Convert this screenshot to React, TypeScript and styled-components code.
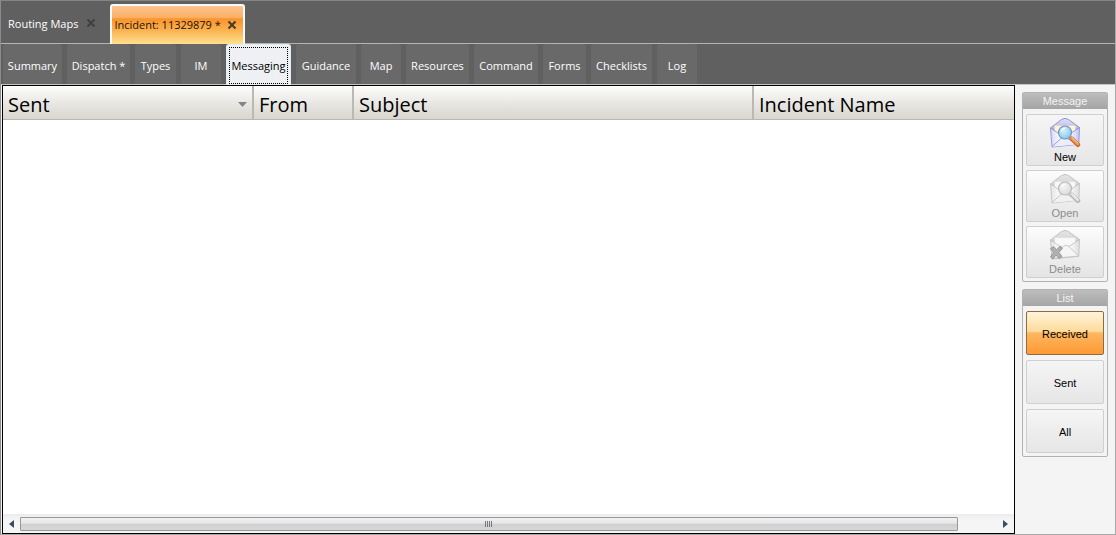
import React, { useState } from "react";
import styled, { createGlobalStyle, css } from "styled-components";

const GlobalStyle = createGlobalStyle`
  *, *::before, *::after { box-sizing: border-box; }
  body { margin: 0; background: #f4f4f4; }
  button { margin: 0; padding: 0; border: 0; background: none; font: inherit; color: inherit; }
`;

const uiFont = `"Open Sans", "Noto Sans", sans-serif`;
const classicFont = `"Liberation Sans", Arial, sans-serif`;

const Shell = styled.div`
  display: flex;
  flex-direction: column;
  min-height: 100vh;
  border: 1px solid #a8a8a8;
  border-left-color: #8c8c8c;
  border-top-color: #858585;
  background: #606060;
  font-family: ${uiFont};
  font-size: 11px;
  color: #fff;
`;

const DocumentBar = styled.header`
  display: flex;
  align-items: flex-end;
  gap: 14px;
  height: 43px;
  padding-left: 7px;
  border-bottom: 1px solid #b4b4b4;
`;

const DocumentTab = styled.div<{ $active?: boolean }>`
  display: flex;
  align-items: center;
  gap: 8px;
  height: 39px;
  ${({ $active }) =>
    $active &&
    css`
      gap: 6px;
      padding: 0 6px 0 2px;
      border: 2px solid #f3faf8;
      border-bottom: 0;
      border-radius: 3px 3px 0 0;
      margin-bottom: -1px;
      height: 40px;
      background: linear-gradient(#fbc592 0%, #fbb065 30%, #f9932c 34%, #fbb352 65%, #fee08e 100%);
      color: #1c1208;
    `}
`;

const TabLabel = styled.button`
  line-height: 16px;
  white-space: nowrap;
`;

const CloseButton = styled.button<{ $dim?: boolean }>`
  display: flex;
  color: ${({ $dim }) => ($dim ? "#404040" : "#49382a")};
  ${({ $dim }) => $dim && "padding-bottom: 2px;"}
`;

const SectionBar = styled.nav`
  display: flex;
  gap: 5px;
  height: 41px;
  padding-left: 2px;
  border-bottom: 1px solid #c4c4c4;
`;

const SectionTab = styled.button<{ $width: number; $active?: boolean }>`
  min-width: ${({ $width }) => $width}px;
  height: 40px;
  padding-top: 4px;
  border-radius: 3px 3px 0 0;
  background: #696969;
  line-height: 16px;
  white-space: nowrap;
  ${({ $active }) =>
    $active &&
    css`
      padding: 2px 2px 1px;
      height: 41px;
      border: 1px solid #dceef0;
      border-bottom: 0;
      background: #eef0f4;
      color: #000;
    `}
`;

const FocusFrame = styled.span`
  display: flex;
  align-items: center;
  justify-content: center;
  height: 100%;
  border: 1px dotted #000;
`;

const Workspace = styled.main`
  display: flex;
  flex: 1;
  background: #f4f4f4;
`;

const ListPane = styled.section`
  display: flex;
  flex: 1;
  flex-direction: column;
  min-width: 0;
  margin-left: 1px;
  border: 1px solid #000;
  background: #fff;
  color: #000;
`;

const MessageTable = styled.table`
  width: 100%;
  border-collapse: separate;
  border-spacing: 0;
  table-layout: fixed;
`;

const HeaderCell = styled.th`
  height: 34px;
  padding: 4px 5px 0;
  border-right: 2px solid #bcb9b1;
  border-bottom: 1px solid #bab7ae;
  background: linear-gradient(#fdfdfc, #e8e6e2 55%, #d9d6cf);
  font-size: 20px;
  font-weight: 400;
  line-height: 28px;
  text-align: left;
  white-space: nowrap;
  &:last-child { border-right: 0; }
`;

const SortButton = styled.button`
  display: flex;
  align-items: center;
  justify-content: space-between;
  width: 100%;
`;

const ListBody = styled.div`
  flex: 1;
`;

const ScrollBar = styled.div`
  display: flex;
  align-items: center;
  height: 19px;
  background: linear-gradient(#ececec, #f5f5f5 30%, #f5f5f5);
`;

const ScrollArrow = styled.button`
  display: flex;
  justify-content: center;
  width: 17px;
`;

const ScrollTrack = styled.div`
  flex: 1;
`;

const ScrollThumb = styled.div`
  display: flex;
  align-items: center;
  justify-content: center;
  gap: 1px;
  width: 96%;
  height: 14px;
  border: 1px solid #989898;
  border-radius: 1px;
  background: linear-gradient(#f2f2f3 0%, #e5e5e7 45%, #cfcfd2 50%, #d8d8da 100%);
`;

const Grip = styled.span`
  width: 1px;
  height: 6px;
  background: #777;
`;

const SideBar = styled.aside`
  display: flex;
  flex-direction: column;
  gap: 7px;
  padding: 7px 7px 0;
  font-family: ${classicFont};
`;

const Group = styled.section`
  width: 86px;
  border: 1px solid #b2b2b2;
  border-radius: 2px;
`;

const GroupTitle = styled.h2`
  margin: 0;
  background: linear-gradient(#bdbdbd, #a5a5a5);
  color: #f4f4f4;
  font-size: 11px;
  font-weight: 400;
  line-height: 16px;
  text-align: center;
`;

const GroupButtons = styled.div<{ $gap: number }>`
  display: flex;
  flex-direction: column;
  gap: ${({ $gap }) => $gap}px;
  padding: 5px 3px 3px;
`;

const ActionButton = styled.button<{ $tall?: boolean }>`
  display: flex;
  flex-direction: column;
  align-items: center;
  justify-content: center;
  gap: 2px;
  height: ${({ $tall }) => ($tall ? 52 : 44)}px;
  padding-top: ${({ $tall }) => ($tall ? 0 : 2)}px;
  border: 1px solid #cfcfcf;
  border-radius: 2px;
  background: linear-gradient(#f5f5f5, #e6e6e6);
  color: #000;
  line-height: 14px;
  &:disabled { color: #8c8c8c; background: linear-gradient(#fcfcfc, #e4e4e4); }
  &[aria-pressed="true"] {
    border-color: #8e6b42;
    background: linear-gradient(#fff4da 0%, #fedb9b 46%, #fdb660 50%, #fe9a33 100%);
  }
`;

const CloseIcon = () => (
  <svg width="10" height="10" viewBox="0 0 10 10" aria-hidden="true">
    <path d="M1.5 1.5L8.5 8.5M8.5 1.5L1.5 8.5" stroke="currentColor" strokeWidth="2.1" />
  </svg>
);

const SortIcon = () => (
  <svg width="9" height="5" viewBox="0 0 9 5" aria-hidden="true">
    <path d="M0 0H9L4.5 5Z" fill="#858585" />
  </svg>
);

const Arrow = ({ d }: { d: string }) => (
  <svg width="5" height="8" viewBox="0 0 5 8" aria-hidden="true">
    <path d={d} fill="#3f4a68" />
  </svg>
);

type MailIconProps = { kind: "new" | "open" | "delete" };

const MailIcon = ({ kind }: MailIconProps) => {
  const isNew = kind === "new";
  const line = isNew ? "#8f92d2" : "#c2c2c2";
  const id = `mail-${kind}`;
  return (
    <svg width="32" height="32" viewBox="0 0 32 32" fill="none" aria-hidden="true">
      <defs>
        <linearGradient id={`${id}-flap`} x1="0" y1="0" x2="0" y2="1">
          <stop offset="0" stopColor={isNew ? "#dfe0fb" : "#e6e6e6"} />
          <stop offset="1" stopColor={isNew ? "#b3b6ee" : "#d2d2d2"} />
        </linearGradient>
        <linearGradient id={`${id}-body`} x1="0" y1="0" x2="1" y2="0">
          <stop offset="0" stopColor={isNew ? "#d5d7fa" : "#e4e4e4"} />
          <stop offset="0.3" stopColor={isNew ? "#f8f9ff" : "#f9f9f9"} />
          <stop offset="0.7" stopColor={isNew ? "#f6f7ff" : "#f8f8f8"} />
          <stop offset="1" stopColor={isNew ? "#bfc2f4" : "#dedede"} />
        </linearGradient>
        <radialGradient id={`${id}-lens`} cx="0.4" cy="0.35" r="0.75">
          <stop offset="0" stopColor={isNew ? "#d3f0fc" : "#f4f4f4"} />
          <stop offset="1" stopColor={isNew ? "#7cc4ea" : "#d8d8d8"} />
        </radialGradient>
      </defs>
      <path d="M1.500 12L12.500 3.500Q16 1.300 19.500 3.500L30.500 11.500L26 14H6Z" fill={`url(#${id}-flap)`} stroke={line} strokeLinejoin="round" />
      <path d="M5.500 9.500H26.500V17L16 23L5.500 17Z" fill={isNew ? "#fff3dc" : "#f8f8f8"} stroke={isNew ? "#e3cdb0" : "#dcdcdc"} strokeWidth=".7" />
      <path d="M1.500 12L12 19L16 21L20 18.500L30.500 11.500L29.800 28.300L3 31Z" fill={`url(#${id}-body)`} stroke={line} strokeWidth=".9" strokeLinejoin="round" />
      {kind === "delete" ? (
        <path d="M3 30.500L12.500 20Q16.500 15 21 19.500L29.500 28Z" fill="#f5f5f5" stroke="#c4c4c4" strokeWidth=".9" strokeLinejoin="round" />
      ) : (
        <path d="M3 30.700L14 20.500L29.500 28.200" fill={isNew ? "#eceeff" : "#f1f1f1"} stroke={line} strokeWidth=".9" strokeLinejoin="round" />
      )}
      {kind === "delete" ? (
        <path d="M1.500 20.500L4.500 18.500L7.500 22L11 18L13.500 20L10 24.500L13 28.500L10 30.500L7 27L4 31L1.500 29L4.500 24.500Z" fill="#b0b0b0" stroke="#8a8a8a" strokeWidth=".8" strokeLinejoin="round" />
      ) : (
        <>
          <path d="M22.500 22.500L29 28.800" stroke={isNew ? "#bf6a3c" : "#b2b2b2"} strokeWidth="4.400" strokeLinecap="round" />
          <path d="M22.500 22L28.800 28" stroke={isNew ? "#fb9448" : "#e0e0e0"} strokeWidth="2.800" strokeLinecap="round" />
          <path d="M23 21.800L28.800 27.300" stroke={isNew ? "#ffd3a3" : "#f5f5f5"} />
          <circle cx="16" cy="16.500" r="6.500" fill={`url(#${id}-lens)`} stroke={isNew ? "#7593bb" : "#bababa"} strokeWidth="1.200" />
          <path d="M12.500 15Q13.500 12 16.500 12" stroke="#fff" strokeWidth="1.100" strokeLinecap="round" />
        </>
      )}
    </svg>
  );
};

const sections = [
  { label: "Summary", width: 59 },
  { label: "Dispatch *", width: 63 },
  { label: "Types", width: 41 },
  { label: "IM", width: 40 },
  { label: "Messaging", width: 65 },
  { label: "Guidance", width: 60 },
  { label: "Map", width: 40 },
  { label: "Resources", width: 63 },
  { label: "Command", width: 64 },
  { label: "Forms", width: 43 },
  { label: "Checklists", width: 61 },
  { label: "Log", width: 40 },
];

const filters = ["Received", "Sent", "All"];

export default function App() {
  const [section, setSection] = useState("Messaging");
  const [filter, setFilter] = useState("Received");

  return (
    <Shell>
      <GlobalStyle />
      <DocumentBar>
        <DocumentTab>
          <TabLabel>Routing Maps</TabLabel>
          <CloseButton $dim aria-label="Close Routing Maps"><CloseIcon /></CloseButton>
        </DocumentTab>
        <DocumentTab $active>
          <TabLabel>Incident: 11329879 *</TabLabel>
          <CloseButton aria-label="Close Incident 11329879"><CloseIcon /></CloseButton>
        </DocumentTab>
      </DocumentBar>
      <SectionBar>
        {sections.map(({ label, width }) => (
          <SectionTab key={label} $width={width} $active={label === section} onClick={() => setSection(label)}>
            {label === section ? <FocusFrame>{label}</FocusFrame> : label}
          </SectionTab>
        ))}
      </SectionBar>
      <Workspace>
        <ListPane>
          <MessageTable>
            <colgroup>
              <col style={{ width: 251 }} />
              <col style={{ width: 100 }} />
              <col style={{ width: 400 }} />
              <col />
            </colgroup>
            <thead>
              <tr>
                <HeaderCell aria-sort="descending">
                  <SortButton>Sent<SortIcon /></SortButton>
                </HeaderCell>
                <HeaderCell>From</HeaderCell>
                <HeaderCell>Subject</HeaderCell>
                <HeaderCell>Incident Name</HeaderCell>
              </tr>
            </thead>
          </MessageTable>
          <ListBody />
          <ScrollBar>
            <ScrollArrow aria-label="Scroll left"><Arrow d="M5 0V8L0 4Z" /></ScrollArrow>
            <ScrollTrack>
              <ScrollThumb><Grip /><Grip /><Grip /><Grip /></ScrollThumb>
            </ScrollTrack>
            <ScrollArrow aria-label="Scroll right"><Arrow d="M0 0V8L5 4Z" /></ScrollArrow>
          </ScrollBar>
        </ListPane>
        <SideBar>
          <Group>
            <GroupTitle>Message</GroupTitle>
            <GroupButtons $gap={4}>
              <ActionButton $tall><MailIcon kind="new" />New</ActionButton>
              <ActionButton $tall disabled><MailIcon kind="open" />Open</ActionButton>
              <ActionButton $tall disabled><MailIcon kind="delete" />Delete</ActionButton>
            </GroupButtons>
          </Group>
          <Group>
            <GroupTitle>List</GroupTitle>
            <GroupButtons $gap={5}>
              {filters.map((name) => (
                <ActionButton key={name} aria-pressed={name === filter} onClick={() => setFilter(name)}>
                  {name}
                </ActionButton>
              ))}
            </GroupButtons>
          </Group>
        </SideBar>
      </Workspace>
    </Shell>
  );
}
